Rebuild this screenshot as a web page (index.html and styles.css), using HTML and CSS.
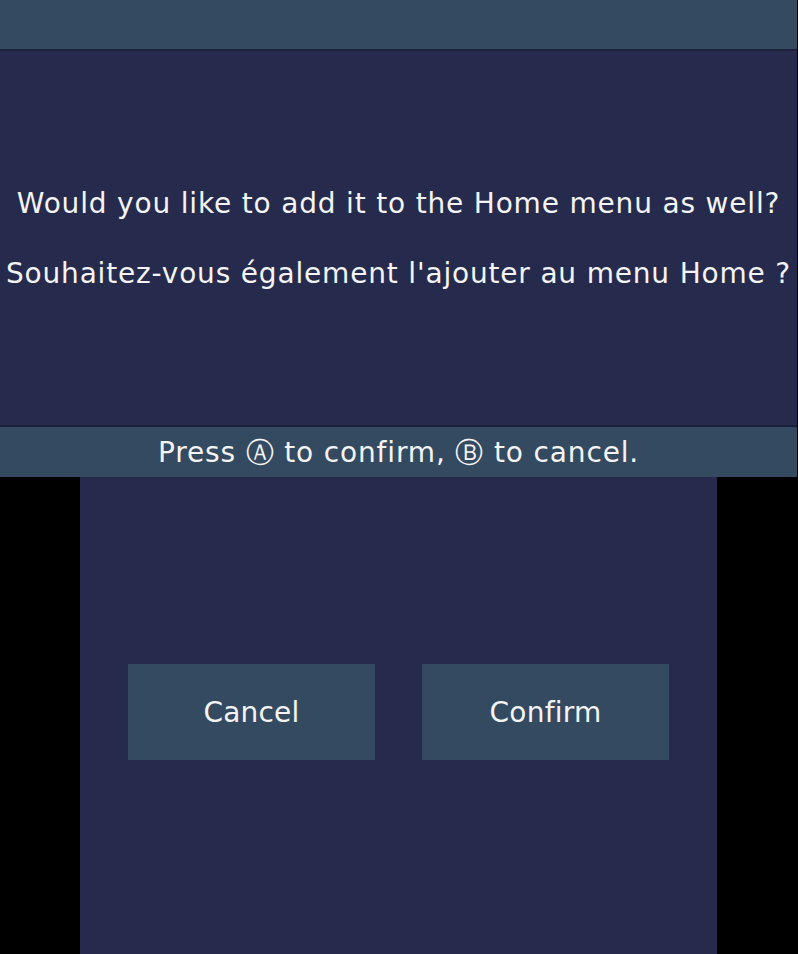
FILE: index.html
```html
<!DOCTYPE html>
<html lang="en">
<head>
<meta charset="utf-8">
<title>Add to Home menu</title>
<link rel="stylesheet" href="styles.css">
</head>
<body>
<div class="top-screen">
  <div class="top-bar"></div>
  <div class="message">
    <p class="line">Would you like to add it to the Home menu as well?</p>
    <p class="line">Souhaitez-vous également l'ajouter au menu Home ?</p>
  </div>
  <div class="hint-bar">Press Ⓐ to confirm, Ⓑ to cancel.</div>
</div>
<div class="bottom-screen">
  <div class="buttons">
    <div class="btn">Cancel</div>
    <div class="btn">Confirm</div>
  </div>
</div>
</body>
</html>
```

FILE: styles.css
```css
html, body {
  margin: 0;
  padding: 0;
  background: #000;
}
body {
  width: 798px;
  height: 954px;
  overflow: hidden;
  font-family: "DejaVu Sans", sans-serif;
  color: #f4f4f4;
}
.top-screen {
  width: 797px;
  height: 477px;
  background: #262b4d;
  display: flex;
  flex-direction: column;
}
.top-bar {
  height: 49px;
  background: #344a61;
  border-bottom: 2px solid #1c2139;
  flex: none;
}
.message {
  flex: 1;
  display: flex;
  flex-direction: column;
  justify-content: center;
  align-items: center;
  gap: 36px;
  padding-top: 2px;
}
.line {
  margin: 0;
  font-size: 28px;
  line-height: 34px;
  white-space: nowrap;
  letter-spacing: 0.82px;
}
.hint-bar {
  flex: none;
  height: 50px;
  border-top: 2px solid #1c2139;
  background: #344a61;
  font-size: 28px;
  line-height: 52px;
  text-align: center;
  letter-spacing: 0.85px;
}
.bottom-screen {
  width: 637px;
  height: 477px;
  margin-left: 80px;
  background: #262b4d;
  display: flex;
  justify-content: center;
  align-items: center;
  padding-bottom: 7px;
  box-sizing: border-box;
}
.buttons {
  display: flex;
  gap: 47px;
}
.btn {
  width: 247px;
  height: 96px;
  background: #344a61;
  font-size: 28px;
  letter-spacing: 0.2px;
  display: flex;
  align-items: center;
  justify-content: center;
}
```
